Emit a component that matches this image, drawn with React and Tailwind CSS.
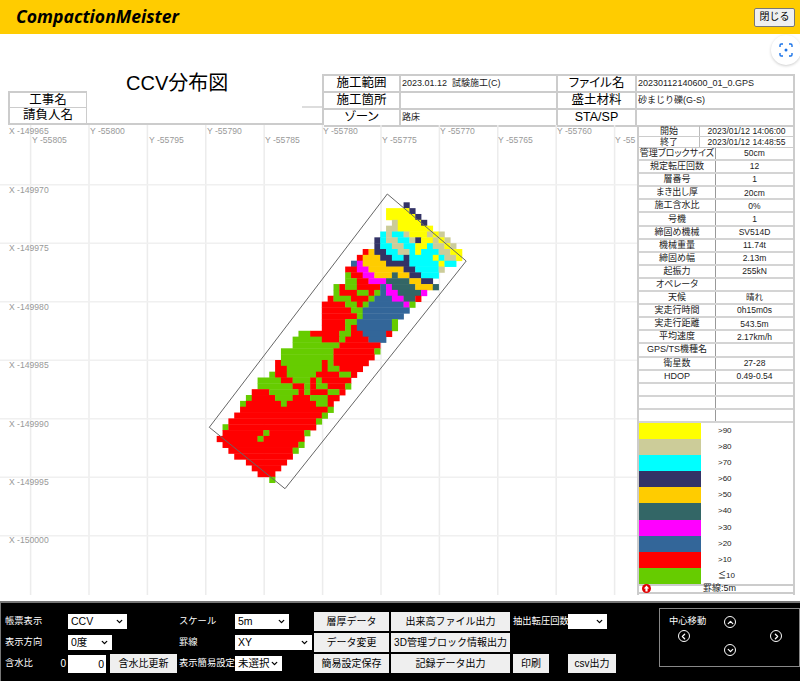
import React from 'react';
import { ChevronDown, ChevronUp, ChevronLeft, ChevronRight } from 'lucide-react';

const COLORS = { Y: '#ffff00', K: '#cccc99', C: '#00ffff', N: '#333366', O: '#ffcc00', T: '#336666', M: '#ff00ff', B: '#336699', R: '#ff0000', G: '#66cc00' };

const ROWS = [
  'N32',
  'Y29-32 N33',
  'Y29-33 N34',
  'K30 Y31-34 N35',
  'K29-30 Y31-36',
  'C28 K29 C30-31 K32 Y33-35 K36 Y37 K38',
  'N27 C28 K29-30 C31-32 K33 N34 Y35-36 K37 Y38 K39',
  'N27 C28-29 K30-31 C32-33 Y34-35 C36 K37-38 Y39 K40',
  'R25 O26 N27-28 C29-30 K31-32 C33 Y34 C35-37 K38-39 Y40-41',
  'R24 O25-27 N28-29 C30-31 N32 C33-36 Y37 C38 K39-40 Y41',
  'B23 M24 O25-28 N29-32 C33-37 Y38 C39-40',
  'R22-23 M24-25 O26-31 N32-33 C34-37 K38',
  'G22 R23-24 M25-26 O27-29 T30 O31-32 N33-34 C35-37',
  'G22-23 R24-25 M26-28 T29-32 O33-34 N35-36',
  'G20 R21 G22-23 R24-27 B28 M29 T30-33 O34-36 T37',
  'G20 R21-23 G24-25 R26 G27 B28 M29-30 T31-34 M35',
  'R19 G20-22 R23-25 G26 B27-29 M30-31 T32-33 R34',
  'R18-21 G22-23 R24 G25 B26-31 M32 G33',
  'R18-22 G23-24 B25-32',
  'R18-23 G24 B25-31',
  'R18-21 G22-23 B24-29 G30',
  'R18-21 G22 R23 B24-29 G30',
  'G14-15 R16-20 G21-22 R23-24 B25-28 R29',
  'G13-17 R18-20 G21 R22-25 B26-28',
  'G13-20 R21-27',
  'G11-19 R20-26 G27',
  'G11-19 R20-26',
  'R10 G11-17 R18 G19 R20-25',
  'R10-11 G12-17 R18 G19-20 R21-24',
  'G9 R10-11 G12-16 R17-20 G21-22 R23',
  'G7-10 R11-12 G13-15 R16 G17 R18-22',
  'G7-12 R13-14 G15 R16 G17-18 R19-21 G22',
  'R6-8 G9-13 R14 G15 R16-18 G19-20 R21',
  'G5 R6-9 G10-12 R13-15 G16 G17-18 R19-20',
  'G4 R5-10 G11 R12-16 G17-18 R19',
  'R4-18 G19',
  'R3-17 G18',
  'R2-16 G17',
  'G1 R2-16',
  'R1-7 G8 R9-14 G15',
  'R0-6 G7 R8-14',
  'R1-13 G14',
  'R2-12 G13',
  'R3-12',
  'R5-11',
  'R6-10',
  'R7-9',
  'G9',
];

const CW = 5.84;
const X0 = 216.7;
const Y0 = 202.3;

function cells() {
  const out = [];
  ROWS.forEach((row, r) => {
    row.split(' ').forEach((tok) => {
      const color = COLORS[tok[0]];
      const [a, b] = tok.slice(1).split('-').map(Number);
      const end = b === undefined ? a : b;
      out.push(<rect key={r + tok} x={X0 + a * CW} y={Y0 + r * CW} width={(end - a + 1) * CW + 0.3} height={CW + 0.4} fill={color} />);
    });
  });
  return out;
}

const VX = [30.6, 89, 147.4, 205.8, 264.2, 322.6, 381, 439.4, 497.8, 556.2, 614.6];
const HY = [184.7, 243.2, 301.7, 360.2, 418.7, 477.2, 535.7];
const YLABELS = [
  [32, 143, 'Y -55805'], [90, 134, 'Y -55800'], [149, 143, 'Y -55795'], [207, 134, 'Y -55790'], [265, 143, 'Y -55785'],
  [323, 134, 'Y -55780'], [382, 143, 'Y -55775'], [440, 134, 'Y -55770'], [498, 143, 'Y -55765'], [557, 134, 'Y -55760'], [615, 143, 'Y -55'],
];
const XLABELS = [
  [134, 'X -149965'], [193, 'X -149970'], [251, 'X -149975'], [310, 'X -149980'], [368, 'X -149985'], [427, 'X -149990'], [485, 'X -149995'], [543, 'X -150000'],
];

function Chart() {
  return (
    <svg className="block w-[637px] h-[470px]" viewBox="0 125 637 470">
      {VX.map((x) => <line key={x} x1={x} x2={x} y1={125} y2={595} stroke="#ececec" strokeWidth="1.5" />)}
      {HY.map((y) => <line key={y} x1={0} x2={637} y1={y} y2={y} stroke="#f0f0f0" strokeWidth="1.5" />)}
      {YLABELS.map(([x, y, t]) => <text key={t} x={x} y={y} fontSize="8.6" fill="#999999" fontFamily="Liberation Sans">{t}</text>)}
      {XLABELS.map(([y, t]) => <text key={t} x={9} y={y} fontSize="8.6" fill="#999999" fontFamily="Liberation Sans">{t}</text>)}
      {cells()}
      <polygon points="387.3,194 466.2,261 285,488.7 209.3,427.3" fill="none" stroke="#666666" strokeWidth="1" />
    </svg>
  );
}

const LABEL = "font-['Liberation_Sans','Noto_Sans_CJK_JP',sans-serif] [font-feature-settings:'palt']";

function HeadLabel({ children, className = '' }) {
  return <div className={`flex items-center justify-center text-[12.5px] leading-none text-black border-r-2 border-b-2 border-[#ccc] ${LABEL} ${className}`}>{children}</div>;
}
function HeadValue({ children }) {
  return <div className={`flex items-center pl-[1px] text-[9px] leading-none text-[#222] border-r-2 border-b-2 border-[#ccc] font-['Liberation_Sans','Noto_Sans_CJK_JP',sans-serif]`}>{children}</div>;
}

function ReportHead() {
  return (
    <div className="flex h-[51px] mt-[40px]">
      <div className="w-[322px] pl-[8px] flex flex-col">
        <div className={`h-[17px] pl-[118px] flex items-center text-[20px] leading-none text-black font-['Liberation_Sans','Noto_Sans_CJK_JP',sans-serif]`}>CCV分布図</div>
        <div className="flex h-[17px]">
          <div className={`w-[79px] flex items-center justify-center text-[12.5px] leading-none text-black border-2 border-r border-b border-[#ccc] ${LABEL}`}>工事名</div>
          <div className="flex-1 flex items-end justify-end"><div className="w-[20px] h-[2px] bg-[#ddd]" /></div>
        </div>
        <div className="flex h-[17px] border-b-2 border-[#ccc]">
          <div className={`w-[79px] flex items-center justify-center text-[12.5px] leading-none text-black border-l-2 border-r border-[#ccc] ${LABEL}`}>請負人名</div>
          <div className="flex-1" />
        </div>
      </div>
      <div className="w-[473px] grid grid-cols-[77px_157px_79px_158px] grid-rows-[17px_17px_17px] border-l-2 border-t-2 border-[#ccc] box-border">
        <HeadLabel>施工範囲</HeadLabel>
        <HeadValue>2023.01.12 &nbsp;試験施工(C)</HeadValue>
        <HeadLabel>ファイル名</HeadLabel>
        <HeadValue>20230112140600_01_0.GPS</HeadValue>
        <HeadLabel>施工箇所</HeadLabel>
        <HeadValue />
        <HeadLabel>盛土材料</HeadLabel>
        <HeadValue>砂まじり礫(G-S)</HeadValue>
        <HeadLabel>ゾーン</HeadLabel>
        <HeadValue>路床</HeadValue>
        <HeadLabel>STA/SP</HeadLabel>
        <HeadValue />
      </div>
    </div>
  );
}

const INFO = [
  ['管理ブロックサイズ', '50cm'], ['規定転圧回数', '12'], ['層番号', '1'], ['まき出し厚', '20cm'], ['施工含水比', '0%'], ['号機', '1'],
  ['締固め機械', 'SV514D'], ['機械重量', '11.74t'], ['締固め幅', '2.13m'], ['起振力', '255kN'], ['オペレータ', ''], ['天候', '晴れ'],
  ['実走行時間', '0h15m0s'], ['実走行距離', '543.5m'], ['平均速度', '2.17km/h'], ['GPS/TS機種名', ''], ['衛星数', '27-28'], ['HDOP', '0.49-0.54'],
  ['', ''], ['', ''], ['', ''],
];
const LEGEND = [
  ['#ffff00', '>90'], ['#cccc99', '>80'], ['#00ffff', '>70'], ['#333366', '>60'], ['#ffcc00', '>50'],
  ['#336666', '>40'], ['#ff00ff', '>30'], ['#336699', '>20'], ['#ff0000', '>10'], ['#66cc00', '≦10'],
];
const SIDEFONT = "font-['Liberation_Sans','Noto_Sans_CJK_JP',sans-serif] [font-feature-settings:'palt']";

function SidePanel() {
  return (
    <div className={`w-[158px] h-[469px] mt-[1px] flex flex-col border-x-2 border-[#ccc] text-[8.5px] leading-none text-[#222] ${SIDEFONT}`}>
      {[['開始', '2023/01/12 14:06:00'], ['終了', '2023/01/12 14:48:55']].map(([a, b]) => (
        <div key={a} className="h-[11px] shrink-0 flex border-b border-[#ccc]">
          <div className="w-[61px] flex items-center justify-center text-[9px] border-r border-[#bbb]">{a}</div>
          <div className="flex-1 flex items-center justify-center">{b}</div>
        </div>
      ))}
      {INFO.map(([a, b], i) => (
        <div key={i} className="h-[13.1px] shrink-0 flex border-b-2 border-[#d4d4d4]">
          <div className="w-[77px] flex items-center justify-center text-[9px] border-r border-[#999]">{a}</div>
          <div className="flex-1 flex items-center justify-center">{b}</div>
        </div>
      ))}
      <div className="flex flex-col shrink-0">
        {LEGEND.map(([c, t]) => (
          <div key={t} className="h-[16.1px] shrink-0 flex items-center">
            <div className="w-[62px] h-full" style={{ backgroundColor: c }} />
            <div className="pl-[17px] text-[8px]">{t}</div>
          </div>
        ))}
      </div>
      <div className="h-[10px] shrink-0 flex items-center border-y-2 border-[#ccc] box-border">
        <svg className="ml-[3px] w-[9px] h-[9px]" viewBox="0 0 10 10">
          <circle cx="5" cy="5" r="5" fill="#e00000" />
          <path d="M5 1.6 L8 5 H6.2 V8.2 H3.8 V5 H2 Z" fill="#ffffff" />
        </svg>
        <div className="ml-[52px] text-[9px]">罫線:5m</div>
      </div>
    </div>
  );
}

const CTRL_LABEL = "text-[9.3px] leading-none text-white whitespace-nowrap";
const BTN = "h-[19px] bg-[#efefef] text-black text-[10px] leading-none flex items-center justify-center whitespace-nowrap";
const Cell = ({ className = '', children }) => <div className={`flex items-center ${className}`}>{children}</div>;

function Select({ width, value }) {
  return (
    <div className={`relative h-[15px] ${width}`}>
      <select className="block appearance-none w-full h-full bg-white text-black text-[10.5px] leading-none rounded-none border-0 outline-none pl-[3px]" defaultValue={value}>
        {value ? <option>{value}</option> : null}
      </select>
      <ChevronDown size={9} strokeWidth={3.5} color="#000000" className="absolute right-[3px] top-[3px] pointer-events-none" />
    </div>
  );
}

function Controls() {
  return (
    <div className={`h-[80px] bg-black border-t-2 border-l border-[#777] flex ${"font-['Liberation_Sans','Noto_Sans_CJK_JP',sans-serif]"}`}>
      <div className="pl-[4px] pt-[8px] w-[658px] grid grid-cols-[63px_111px_56px_79px_77px_122px_55px_95px] grid-rows-[21px_21px_21px]">
        <Cell><span className={CTRL_LABEL}>帳票表示</span></Cell>
        <Cell><Select width="w-[59px]" value="CCV" /></Cell>
        <Cell><span className={CTRL_LABEL}>スケール</span></Cell>
        <Cell><Select width="w-[54px]" value="5m" /></Cell>
        <Cell><button className={`${BTN} w-[75px]`}>層厚データ</button></Cell>
        <Cell><button className={`${BTN} w-[119px]`}>出来高ファイル出力</button></Cell>
        <Cell><span className={CTRL_LABEL}>抽出転圧回数</span></Cell>
        <Cell><Select width="w-[39px]" /></Cell>

        <Cell><span className={CTRL_LABEL}>表示方向</span></Cell>
        <Cell><Select width="w-[44px]" value="0度" /></Cell>
        <Cell><span className={CTRL_LABEL}>罫線</span></Cell>
        <Cell><Select width="w-[77px]" value="XY" /></Cell>
        <Cell><button className={`${BTN} w-[75px]`}>データ変更</button></Cell>
        <Cell><button className={`${BTN} w-[119px]`}>3D管理ブロック情報出力</button></Cell>
        <Cell />
        <Cell />

        <Cell className="justify-between pr-[2px]"><span className={CTRL_LABEL}>含水比</span><span className="text-[10px] text-white leading-none">0</span></Cell>
        <Cell className="gap-[4px]">
          <input readOnly value="0" className="block w-[38px] h-[18px] bg-white text-black text-[10.5px] text-right pr-[2px] outline-none" />
          <button className={`${BTN} w-[67px]`}>含水比更新</button>
        </Cell>
        <Cell><span className={CTRL_LABEL}>表示簡易設定</span></Cell>
        <Cell><Select width="w-[47px]" value="未選択" /></Cell>
        <Cell><button className={`${BTN} w-[75px]`}>簡易設定保存</button></Cell>
        <Cell><button className={`${BTN} w-[119px]`}>記録データ出力</button></Cell>
        <Cell><button className={`${BTN} w-[36px]`}>印刷</button></Cell>
        <Cell><button className={`${BTN} w-[48px]`}>csv出力</button></Cell>
      </div>
      <div className="mt-[5px] h-[59px] w-[142px] border border-[#888] pt-[6px] grid grid-cols-[47px_46px_46px] grid-rows-[14px_14px_14px] text-white">
        <div className="flex items-center pl-[9px] text-[9.3px] leading-none whitespace-nowrap">中心移動</div>
        <Nav icon={ChevronUp} />
        <div />
        <Nav icon={ChevronLeft} />
        <div />
        <Nav icon={ChevronRight} />
        <div />
        <Nav icon={ChevronDown} />
        <div />
      </div>
    </div>
  );
}

function Nav({ icon: Icon }) {
  return (
    <div className="flex items-center justify-center">
      <div className="w-[12px] h-[12px] rounded-full border-[1.5px] border-white flex items-center justify-center">
        <Icon size={9} strokeWidth={3.5} color="#ffffff" />
      </div>
    </div>
  );
}

export default function App() {
  return (
    <div className="relative w-[800px] h-[681px] bg-white overflow-hidden flex flex-col">
      <div className="h-[34px] shrink-0 bg-[#ffcc00] flex items-center justify-between pl-[16px] pr-[5px]">
        <span className="text-[17.6px] font-bold italic text-black leading-none font-['Open_Sans',sans-serif]">CompactionMeister</span>
        <button className="w-[41px] h-[19px] bg-[#f0f0f0] border border-[#777] rounded-[2px] text-[10px] leading-none text-black font-['Liberation_Sans','Noto_Sans_CJK_JP',sans-serif]">閉じる</button>
      </div>
      <div className="absolute top-[35px] left-[771px] w-[30px] h-[30px] rounded-full bg-white shadow-[0_1px_3px_rgba(0,0,0,0.2)] flex items-center justify-center">
        <svg width="14" height="14" viewBox="0 0 14 14" fill="none" stroke="#1a73e8" strokeWidth="1.4">
          <path d="M1 4 V2.2 A1.2 1.2 0 0 1 2.2 1 H4 M10 1 H11.8 A1.2 1.2 0 0 1 13 2.2 V4 M13 10 V11.8 A1.2 1.2 0 0 1 11.8 13 H10 M4 13 H2.2 A1.2 1.2 0 0 1 1 11.8 V10" />
          <circle cx="7" cy="7" r="1.5" fill="#1a73e8" stroke="none" />
        </svg>
      </div>
      <ReportHead />
      <div className="flex h-[470px] shrink-0">
        <Chart />
        <SidePanel />
      </div>
      <div className="h-[6px] shrink-0" />
      <Controls />
    </div>
  );
}
